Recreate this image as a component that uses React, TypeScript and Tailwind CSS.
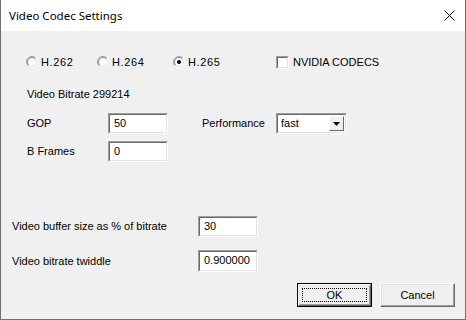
import React from "react";

const Sunken = ({ className = "", children }: { className?: string; children?: React.ReactNode }) => (
  <div className={`border border-t-[#a0a0a0] border-l-[#a0a0a0] border-b-white border-r-white ${className}`}>
    <div className="w-full h-full border border-t-[#696969] border-l-[#696969] border-b-[#e3e3e3] border-r-[#e3e3e3] bg-white">
      {children}
    </div>
  </div>
);

const Radio = ({ label, checked, w }: { label: string; checked?: boolean; w: string }) => (
  <div className={`flex items-center ${w}`}>
    <svg width="12" height="12" viewBox="0 0 12 12" className="shrink-0">
      <circle cx="6" cy="6" r="4.2" fill="#fff" />
      <path d="M2.1 9.9 A5.5 5.5 0 0 1 9.9 2.1" fill="none" stroke="#a0a0a0" strokeWidth="1" />
      <path d="M9.9 2.1 A5.5 5.5 0 0 1 2.1 9.9" fill="none" stroke="#ffffff" strokeWidth="1" />
      <path d="M2.8 9.2 A4.5 4.5 0 0 1 9.2 2.8" fill="none" stroke="#8a8a8a" strokeWidth="1" />
      <path d="M9.2 2.8 A4.5 4.5 0 0 1 2.8 9.2" fill="none" stroke="#e3e3e3" strokeWidth="1" />
      {checked && <circle cx="6" cy="6" r="2" fill="#000" />}
    </svg>
    <span className="ml-[3px] tracking-[0.6px]">{label}</span>
  </div>
);

const Edit = ({ value, w = "w-[60px]", h = "h-[21px]" }: { value: string; w?: string; h?: string }) => (
  <Sunken className={`${w} ${h}`}>
    <div className="pl-[4px] pt-[1px] leading-[14px]">{value}</div>
  </Sunken>
);

const Button = ({ label, def }: { label: string; def?: boolean }) => (
  <div className={`w-[75px] h-[24px] ${def ? "border border-black" : ""}`}>
    <div className="w-full h-full border border-t-white border-l-white border-b-[#696969] border-r-[#696969]">
      <div className="w-full h-full border border-t-[#e3e3e3] border-l-[#e3e3e3] border-b-[#a0a0a0] border-r-[#a0a0a0] bg-[#f0f0f0] flex items-center justify-center p-[2px]">
        <div className={`w-full h-full flex items-center justify-center ${def ? "border border-dotted border-black" : ""}`}>
          {label}
        </div>
      </div>
    </div>
  </div>
);

export default function App() {
  return (
    <div className="w-[466px] h-[320px] border-x border-b border-[#707070] bg-[#f0f0f0] flex flex-col text-[11px] text-black font-['Liberation_Sans',Arial,sans-serif]">
      <div className="h-[31px] bg-white flex items-center justify-between pl-[8px] pr-[10px] shrink-0">
        <span className="text-[11.5px] font-['Noto_Sans',sans-serif] text-black">Video Codec Settings</span>
        <svg width="11" height="11" viewBox="0 0 11 11">
          <path d="M0.5 0.5 L10.5 10.5 M10.5 0.5 L0.5 10.5" stroke="#000" strokeWidth="1" />
        </svg>
      </div>

      <div className="flex flex-col">
        <div className="mt-[23px] h-[16px] flex items-center pl-[25px]">
          <Radio label="H.262" w="w-[71px]" />
          <Radio label="H.264" w="w-[76px]" />
          <Radio label="H.265" checked w="w-[103px]" />
          <div className="flex items-center">
            <Sunken className="w-[13px] h-[13px]" />
            <span className="ml-[4px]">NVIDIA CODECS</span>
          </div>
        </div>

        <div className="mt-[16px] h-[16px] flex items-center pl-[26px]">Video Bitrate 299214</div>

        <div className="mt-[11px] h-[21px] flex items-center pl-[26px]">
          <span className="w-[81px]">GOP</span>
          <Edit value="50" />
          <span className="ml-[34px] w-[74px]">Performance</span>
          <Sunken className="w-[71px] h-[21px]">
            <div className="flex h-full items-center">
              <span className="flex-1 pl-[3px]">fast</span>
              <div className="w-[15px] h-[15px] mr-[1px] border border-t-white border-l-white border-b-[#696969] border-r-[#696969] bg-[#f0f0f0] flex items-center justify-center">
                <svg width="7" height="4" viewBox="0 0 7 4">
                  <path d="M0 0 H7 L3.5 4 Z" fill="#000" />
                </svg>
              </div>
            </div>
          </Sunken>
        </div>

        <div className="mt-[7px] h-[21px] flex items-center pl-[26px]">
          <span className="w-[81px]">B Frames</span>
          <Edit value="0" />
        </div>

        <div className="mt-[54px] h-[21px] flex items-center pl-[11px]">
          <span className="w-[186px]">Video buffer size as % of bitrate</span>
          <Edit value="30" />
        </div>

        <div className="mt-[13px] h-[22px] flex items-center pl-[11px]">
          <span className="w-[186px]">Video bitrate twiddle</span>
          <Edit value="0.900000" h="h-[22px]" />
        </div>

        <div className="mt-[11px] flex justify-end gap-[8px] pr-[10px]">
          <Button label="OK" def />
          <Button label="Cancel" />
        </div>
      </div>
    </div>
  );
}
